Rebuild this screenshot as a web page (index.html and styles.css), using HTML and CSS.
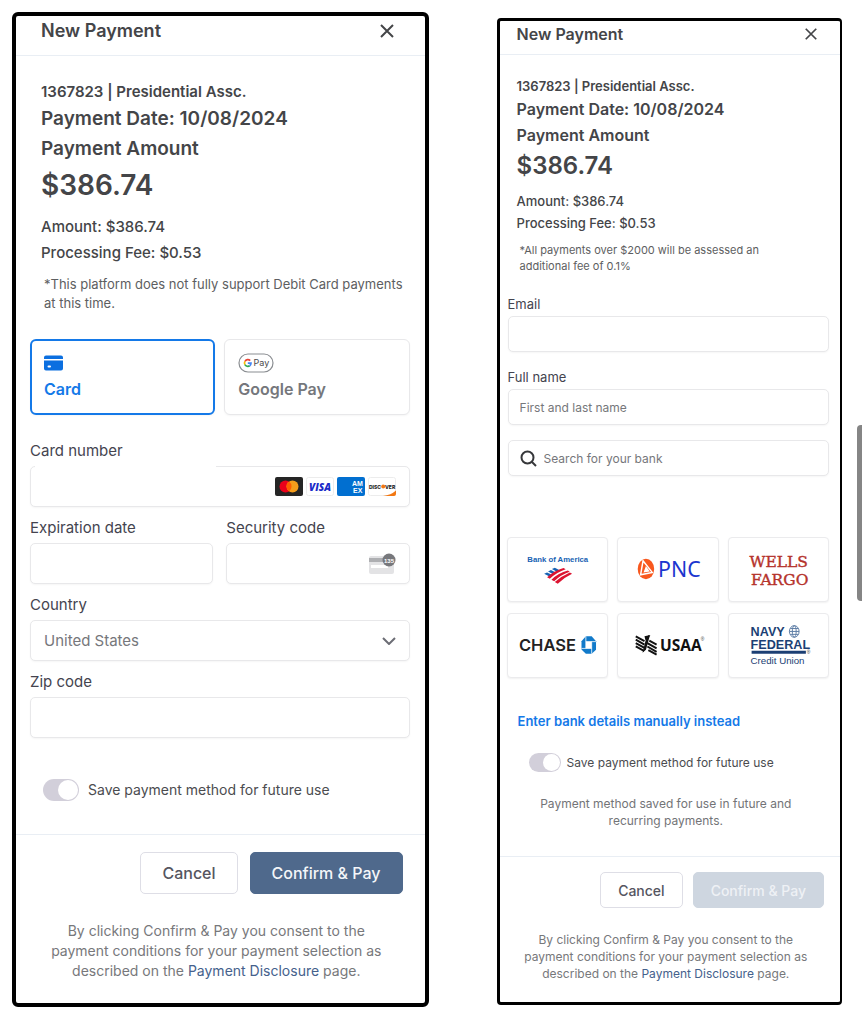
FILE: index.html
```html
<!DOCTYPE html>
<html lang="en">
<head>
  <meta charset="UTF-8">
  <meta name="viewport" content="width=device-width, initial-scale=1">
  <title>New Payment</title>
  <link rel="stylesheet" href="styles.css">
</head>
<body>
  <main class="page">

    <!-- Card payment -->
    <form class="panel panel-card">
      <header class="panel-header">
        <h1>New Payment</h1>
        <button type="button" class="close-btn" aria-label="Close">
          <svg viewBox="0 0 16 16"><path d="M2 2l12 12M14 2L2 14"/></svg>
        </button>
      </header>

      <section class="summary">
        <p class="account">1367823 | Presidential Assc.</p>
        <p class="heading">Payment Date: 10/08/2024</p>
        <p class="heading">Payment Amount</p>
        <p class="total">$386.74</p>
        <p class="line">Amount: $386.74</p>
        <p class="line">Processing Fee: $0.53</p>
        <p class="note">*This platform does not fully support Debit Card payments at this time.</p>
      </section>

      <div class="fields">
        <div class="methods">
          <button type="button" class="method active">
            <svg class="card-icon" viewBox="0 0 19 15">
              <path fill="#0b6fe0" d="M2 0h15a2 2 0 0 1 2 2v1.500H0V2a2 2 0 0 1 2-2zM0 5h19v8a2 2 0 0 1-2 2H2a2 2 0 0 1-2-2z"/>
              <rect x="3.500" y="10" width="3.500" height="2" rx="1" fill="#fff"/>
            </svg>
            <span>Card</span>
          </button>
          <button type="button" class="method">
            <svg class="gpay-icon" viewBox="0 0 36 20">
              <rect x="1" y="1" width="34" height="18" rx="9" fill="#fff" stroke="#8a8d91" stroke-width="1.200"/>
              <g fill="none" stroke-width="1.700">
                <path stroke="#ea4335" d="M12.200 7.600A3.300 3.300 0 0 0 6.900 8.500"/>
                <path stroke="#fbbc04" d="M6.900 8.400a3.300 3.300 0 0 0 0 3.200"/>
                <path stroke="#34a853" d="M6.900 11.600a3.300 3.300 0 0 0 4.800 1.100"/>
                <path stroke="#4285f4" d="M11.700 12.700A3.300 3.300 0 0 0 13 10.200H9.800"/>
              </g>
              <text x="15.500" y="13" class="gpay-text">Pay</text>
            </svg>
            <span>Google Pay</span>
          </button>
        </div>

        <div class="field">
          <label for="cardNumber">Card number</label>
          <div class="control masked">
            <input type="text" id="cardNumber" name="cardNumber" inputmode="numeric">
            <span class="brands">
              <svg viewBox="0 0 28 19">
                <rect width="28" height="19" rx="2" fill="#252525"/>
                <circle cx="10.500" cy="9.500" r="6" fill="#eb001b"/>
                <circle cx="17.500" cy="9.500" r="6" fill="#f79e1b"/>
                <path d="M14 4.600a6 6 0 0 1 0 9.800 6 6 0 0 1 0-9.800z" fill="#ff5f00"/>
              </svg>
              <svg viewBox="0 0 28 19">
                <rect x=".5" y=".5" width="27" height="18" rx="2" fill="#fff" stroke="#ececec"/>
                <text x="14" y="13.500" class="visa-text">VISA</text>
              </svg>
              <svg viewBox="0 0 28 19">
                <rect width="28" height="19" rx="2" fill="#016fd0"/>
                <text x="15" y="9" class="amex-text">AM</text>
                <text x="16" y="16" class="amex-text">EX</text>
              </svg>
              <svg viewBox="0 0 28 19">
                <rect x=".5" y=".5" width="27" height="18" rx="2" fill="#fff" stroke="#ececec"/>
                <path d="M28 13.500V17a2 2 0 0 1-2 2H15q8-1 13-5.500z" fill="#f27712"/>
                <text x="1" y="11.500" class="discover-text">DISC</text>
                <circle cx="15.200" cy="9.500" r="2" fill="#f27712"/>
                <text x="17" y="11.500" class="discover-text">VER</text>
              </svg>
            </span>
          </div>
        </div>

        <div class="field-row">
          <div class="field">
            <label for="expiry">Expiration date</label>
            <div class="control"><input type="text" id="expiry" name="expiry"></div>
          </div>
          <div class="field">
            <label for="cvc">Security code</label>
            <div class="control">
              <input type="text" id="cvc" name="cvc">
              <svg class="cvc-icon" viewBox="0 0 28 21">
                <rect x="1" y="3" width="25" height="18" rx="2" fill="#e3e3e5"/>
                <rect x="1" y="5" width="25" height="4" fill="#aeafb2"/>
                <rect x="3" y="12" width="17" height="3" fill="#fff"/>
                <circle cx="21" cy="7" r="6.500" fill="#77787c"/>
                <text x="21" y="9.500" class="cvc-text">135</text>
              </svg>
            </div>
          </div>
        </div>

        <div class="field">
          <label for="country">Country</label>
          <div class="control">
            <select id="country" name="country">
              <option>United States</option>
            </select>
            <svg class="chevron" viewBox="0 0 14 8"><path d="M1 1l6 6 6-6"/></svg>
          </div>
        </div>

        <div class="field">
          <label for="zip">Zip code</label>
          <div class="control"><input type="text" id="zip" name="zip"></div>
        </div>
      </div>

      <label class="save">
        <input type="checkbox" class="toggle" name="save" checked>
        <span>Save payment method for future use</span>
      </label>

      <footer class="panel-footer">
        <div class="actions">
          <button type="button" class="btn btn-cancel">Cancel</button>
          <button type="submit" class="btn btn-confirm">Confirm &amp; Pay</button>
        </div>
        <p class="legal">By clicking Confirm &amp; Pay you consent to the payment conditions for your payment selection as described on the <a href="#">Payment Disclosure</a> page.</p>
      </footer>
    </form>

    <!-- Bank payment -->
    <form class="panel panel-bank">
      <header class="panel-header">
        <h1>New Payment</h1>
        <button type="button" class="close-btn" aria-label="Close">
          <svg viewBox="0 0 16 16"><path d="M2 2l12 12M14 2L2 14"/></svg>
        </button>
      </header>

      <section class="summary">
        <p class="account">1367823 | Presidential Assc.</p>
        <p class="heading">Payment Date: 10/08/2024</p>
        <p class="heading">Payment Amount</p>
        <p class="total">$386.74</p>
        <p class="line">Amount: $386.74</p>
        <p class="line">Processing Fee: $0.53</p>
        <p class="note">*All payments over $2000 will be assessed an additional fee of 0.1%</p>
      </section>

      <div class="fields">
        <div class="field">
          <label for="email">Email</label>
          <div class="control"><input type="email" id="email" name="email"></div>
        </div>
        <div class="field">
          <label for="fullName">Full name</label>
          <div class="control"><input type="text" id="fullName" name="fullName" placeholder="First and last name"></div>
        </div>
        <div class="control search">
          <svg class="search-icon" viewBox="0 0 17 17"><circle cx="7.500" cy="7.500" r="6"/><path d="M12 12l4 4"/></svg>
          <input type="search" name="bank" placeholder="Search for your bank" aria-label="Search for your bank">
        </div>
      </div>

      <div class="banks">
        <button type="button" class="bank" aria-label="Bank of America">
          <svg viewBox="0 0 102 65">
            <text x="51" y="25" class="boa-text">Bank of America</text>
            <g fill="#1762b3">
              <path d="M37 37l3-1.500 6 3-3 1.500z"/>
              <path d="M41 34.500l3-1.500 5.500 2.800-3 1.500z"/>
              <path d="M45 32l3-1.200 5 2.500-3 1.400z"/>
            </g>
            <g fill="#dc1431">
              <path d="M40 40.500q8-7 17-9.500l2.200 1.200q-9 3-16.400 9.800z"/>
              <path d="M44.500 43q7-7 17-9.500l1.800 1.200q-9 3-16 9.900z"/>
              <path d="M48 45.500Q55 39 63.500 35.500l2.300 1.400Q58 40.500 51 47.200z"/>
            </g>
          </svg>
        </button>
        <button type="button" class="bank" aria-label="PNC">
          <svg viewBox="0 0 102 65">
            <ellipse cx="28.500" cy="32" rx="8.500" ry="10.500" fill="#f8581e"/>
            <path d="M25.500 23.500l9.500 12-12 2.500z" fill="none" stroke="#fff" stroke-width="1.500"/>
            <path d="M28.500 29l4 5.500-6.500 1z" fill="#fff"/>
            <text x="41" y="40" class="pnc-text">PNC</text>
          </svg>
        </button>
        <button type="button" class="bank" aria-label="Wells Fargo">
          <svg viewBox="0 0 102 65">
            <text x="51" y="30" class="wells-text">WELLS</text>
            <text x="52" y="48" class="wells-text">FARGO</text>
          </svg>
        </button>
        <button type="button" class="bank" aria-label="Chase">
          <svg viewBox="0 0 102 65">
            <text x="11" y="38" class="chase-text">CHASE</text>
            <path fill="#117aca" d="M80 23h6l4.500 5v9L86 41h-6l-4.500-4.500V28z"/>
            <path fill="#fff" d="M80 28.500h6v7h-6z"/>
            <path fill="none" stroke="#fff" stroke-width=".8" d="M80 28.500h10.500M86 28.500V41M86 35.500H75.500M80 35.500V23"/>
          </svg>
        </button>
        <button type="button" class="bank" aria-label="USAA">
          <svg viewBox="0 0 102 65">
            <g fill="none" stroke="#111" stroke-width="2">
              <path d="M18 23l9 5M18 26.500l9 5M18 30l9 5M18 33.500l8.500 4.500"/>
              <path d="M30 30l9.500 5.500M30 33.500l9.500 5.500M31 37.200l8.500 4.800"/>
              <path d="M32 27.500l7.500 4"/>
            </g>
            <path d="M25 40l4-16q1-2.500 4-2l-1 2.200-3.500 12.800zM27 23l5-1-4 5z" fill="#111"/>
            <text x="43" y="38" class="usaa-text">USAA</text>
            <text x="85" y="28" class="mark-text">®</text>
          </svg>
        </button>
        <button type="button" class="bank" aria-label="Navy Federal Credit Union">
          <svg viewBox="0 0 102 65">
            <text x="22" y="23" class="navy-text">NAVY</text>
            <text x="22" y="36" class="navy-text">FEDERAL</text>
            <g fill="none" stroke="#5b7ba3">
              <ellipse cx="67" cy="18" rx="5" ry="6"/>
              <ellipse cx="67" cy="18" rx="2" ry="6"/>
              <path d="M62 18h10M63 15h8M63 21h8"/>
            </g>
            <path d="M23 38h56v3H23z" fill="#1c3f74"/>
            <text x="80" y="41" class="mark-text">®</text>
            <text x="22" y="52" class="union-text">Credit Union</text>
          </svg>
        </button>
      </div>

      <a class="manual-link" href="#">Enter bank details manually instead</a>

      <label class="save">
        <input type="checkbox" class="toggle" name="save" checked>
        <span>Save payment method for future use</span>
      </label>
      <p class="save-note">Payment method saved for use in future and recurring payments.</p>

      <footer class="panel-footer">
        <div class="actions">
          <button type="button" class="btn btn-cancel">Cancel</button>
          <button type="submit" class="btn btn-confirm" disabled>Confirm &amp; Pay</button>
        </div>
        <p class="legal">By clicking Confirm &amp; Pay you consent to the payment conditions for your payment selection as described on the <a href="#">Payment Disclosure</a> page.</p>
      </footer>
    </form>
  </main>
  <div class="scroll-thumb"></div>
</body>
</html>
```
FILE: styles.css
```css
* {
  box-sizing: border-box;
}
body {
  margin: 0;
  background: #fff;
  font-family: Inter, "Liberation Sans", sans-serif;
  color: #444548;
}
h1, p {
  margin: 0;
}
button, input, select {
  font-family: inherit;
}
button {
  cursor: pointer;
}
svg {
  display: block;
}
.page {
  display: flex;
  align-items: flex-start;
  gap: 68px;
  padding: 12px 20px 12px 12px;
}
.panel {
  min-width: 0;
  background: #fff;
  border: 4px solid #000;
  border-radius: 6px;
}
.panel-card {
  flex: 6 1 0;
}
.panel-bank {
  flex: 5 1 0;
  margin-top: 6px;
  border-width: 3px 2px 3px 3px;
  border-radius: 4px;
}

/* header */
.panel-header {
  display: flex;
  justify-content: space-between;
  align-items: center;
  padding: 4px 30px 13px 25px;
  border-bottom: 1px solid #e9eef4;
}
.panel-header h1 {
  font-size: 18px;
  line-height: 22px;
  font-weight: 600;
}
.close-btn {
  padding: 0;
  border: none;
  background: none;
}
.close-btn svg {
  width: 16px;
  height: 16px;
  fill: none;
  stroke: #444548;
  stroke-width: 2;
}
.panel-bank .panel-header {
  padding: 3px 22px 10px 17px;
}
.panel-bank .panel-header h1 {
  font-size: 16px;
  line-height: 20px;
}
.panel-bank .close-btn svg {
  width: 14px;
  height: 14px;
}

/* payment summary */
.summary {
  padding: 24px 10px 0 25px;
}
.account {
  font-size: 15px;
  line-height: 24px;
  font-weight: 600;
}
.heading {
  font-size: 19px;
  line-height: 30px;
  font-weight: 600;
}
.total {
  margin-bottom: 8px;
  font-size: 28px;
  line-height: 42px;
  font-weight: 600;
}
.line {
  font-size: 15px;
  line-height: 26px;
  font-weight: 500;
}
.note {
  margin-top: 9px;
  padding-left: 3px;
  font-size: 13px;
  line-height: 19px;
  color: #5d5e61;
}
.panel-bank .summary {
  padding: 21px 17px 0;
}
.panel-bank .account {
  font-size: 13px;
  line-height: 20px;
}
.panel-bank .heading {
  font-size: 16px;
  line-height: 26px;
}
.panel-bank .total {
  margin-bottom: 6px;
  font-size: 24px;
  line-height: 36px;
}
.panel-bank .line {
  font-size: 13px;
  line-height: 22px;
}
.panel-bank .note {
  max-width: 260px;
  margin-top: 8px;
  font-size: 11px;
  line-height: 16px;
}

/* form fields */
.fields {
  display: flex;
  flex-direction: column;
  gap: 11px;
  padding: 26px 15px 0 14px;
}
.methods {
  display: grid;
  grid-template-columns: 1fr 1fr;
  gap: 9px;
  margin-bottom: 15px;
}
.method {
  display: flex;
  flex-direction: column;
  align-items: flex-start;
  gap: 4px;
  padding: 13px;
  border: 1px solid #e8e8ea;
  border-radius: 6px;
  background: #fff;
  box-shadow: 0 1px 2px rgba(0, 0, 0, 0.04);
  font-size: 16px;
  line-height: 24px;
  font-weight: 600;
  color: #75777c;
}
.method.active {
  padding: 12px;
  border: 2px solid #1479e8;
  color: #1479e8;
}
.card-icon {
  width: 19px;
  height: 20px;
}
.gpay-icon {
  width: 36px;
  height: 20px;
}
.gpay-text {
  font-size: 9px;
  font-weight: 400;
  fill: #4a4b4e;
}
.field {
  display: flex;
  flex-direction: column;
  gap: 5px;
  flex: 1;
  min-width: 0;
}
.field label {
  font-size: 15px;
  line-height: 20px;
  color: #44444f;
}
.field-row {
  display: flex;
  gap: 13px;
}
.control {
  position: relative;
  display: flex;
  align-items: center;
  height: 41px;
  padding: 0 13px;
  border: 1px solid #e8e8ea;
  border-radius: 5px;
  background: #fff;
  box-shadow: 0 1px 2px rgba(0, 0, 0, 0.04);
}
.control input,
.control select {
  flex: 1;
  min-width: 0;
  height: 100%;
  padding: 0;
  border: none;
  outline: none;
  background: none;
  appearance: none;
  font-size: 15px;
  color: #76777b;
}
.control input::placeholder {
  color: #76777b;
  opacity: 1;
}
/* open part of the card number outline */
.masked::before {
  content: "";
  position: absolute;
  top: -1px;
  left: 4px;
  width: 48%;
  height: 1px;
  background: #fff;
}
.brands {
  display: flex;
  gap: 3px;
}
.brands svg {
  width: 28px;
  height: 19px;
}
.visa-text {
  font: italic 800 10px "Open Sans", sans-serif;
  text-anchor: middle;
  fill: #1a2bc8;
}
.amex-text {
  font: 700 7px "Liberation Sans", sans-serif;
  fill: #fff;
}
.discover-text {
  font: 800 5px Inter, sans-serif;
  fill: #222;
}
.cvc-icon {
  width: 28px;
  height: 21px;
}
.cvc-text {
  font: 700 6px "Liberation Sans", sans-serif;
  text-anchor: middle;
  fill: #fff;
}
.chevron {
  width: 14px;
  height: 8px;
  fill: none;
  stroke: #6c6d75;
  stroke-width: 2;
  pointer-events: none;
}
.panel-bank .fields {
  gap: 15px;
  padding: 20px 11px 0 8px;
}
.panel-bank .field {
  gap: 2px;
}
.panel-bank .field label {
  font-size: 13px;
}
.panel-bank .control {
  height: 36px;
  padding: 0 11px;
}
.panel-bank .control input {
  font-size: 12px;
}
.search {
  gap: 7px;
}
.search-icon {
  width: 17px;
  height: 17px;
  fill: none;
  stroke: #36373a;
  stroke-width: 2;
}

/* bank list */
.banks {
  display: grid;
  grid-template-columns: repeat(3, 1fr);
  gap: 11px 9px;
  padding: 61px 11px 0 7px;
}
.bank {
  height: 65px;
  padding: 0;
  border: 1px solid #ebebed;
  border-radius: 4px;
  background: #fff;
  box-shadow: 0 1px 2px rgba(0, 0, 0, 0.06);
}
.bank svg {
  width: 100%;
  height: 100%;
}
.boa-text {
  font: 700 8px "Liberation Sans", sans-serif;
  text-anchor: middle;
  fill: #1762b3;
}
.pnc-text {
  font: 22px "Noto Sans", sans-serif;
  fill: #1c36cf;
}
.wells-text {
  font: 16px "DejaVu Serif", serif;
  text-anchor: middle;
  fill: #b5332c;
  stroke: #b5332c;
  stroke-width: 0.4;
}
.chase-text {
  font: 600 17px Inter, sans-serif;
  fill: #222;
}
.usaa-text {
  font: 700 16px "Open Sans", sans-serif;
  fill: #111;
}
.navy-text {
  font: 700 13px "Liberation Sans", sans-serif;
  fill: #1c3f74;
}
.union-text {
  font: 10px "Liberation Sans", sans-serif;
  fill: #1c3f74;
}
.mark-text {
  font: 5px "Liberation Sans", sans-serif;
  fill: #333;
}
.manual-link {
  display: block;
  margin: 34px 18px 0;
  font-size: 13px;
  line-height: 18px;
  font-weight: 600;
  color: #1479e8;
  text-decoration: none;
}

/* save toggle */
.save {
  display: flex;
  align-items: center;
  gap: 9px;
  margin: 41px 27px 33px;
  font-size: 14px;
  line-height: 22px;
  color: #4b4c4f;
}
.toggle {
  appearance: none;
  flex: none;
  display: flex;
  justify-content: flex-end;
  width: 36px;
  height: 22px;
  margin: 0;
  padding: 1px;
  border-radius: 11px;
  background: #d2cfda;
}
.toggle::before {
  content: "";
  width: 20px;
  height: 20px;
  border-radius: 50%;
  background: #fff;
}
.toggle:not(:checked) {
  justify-content: flex-start;
}
.panel-bank .save {
  gap: 6px;
  margin: 23px 29px;
  font-size: 12px;
  line-height: 19px;
}
.panel-bank .toggle {
  width: 32px;
  height: 19px;
}
.panel-bank .toggle::before {
  width: 17px;
  height: 17px;
}
.save-note {
  padding: 0 36px 27px 28px;
  font-size: 12px;
  line-height: 17px;
  text-align: center;
  color: #737477;
}

/* footer */
.panel-footer {
  padding: 17px 22px 22px;
  border-top: 1px solid #e9eef4;
}
.actions {
  display: flex;
  justify-content: flex-end;
  gap: 12px;
}
.btn {
  height: 42px;
  padding: 0 21px;
  border: 1px solid #dedee6;
  border-radius: 5px;
  background: #fff;
  font-size: 16px;
  font-weight: 500;
  color: #55555f;
}
.btn-confirm {
  border-color: #4f698c;
  background: #4f698c;
  color: #f4f6f9;
}
.btn-confirm:disabled {
  border-color: #ced6e0;
  background: #ced6e0;
  color: #eef1f5;
}
.legal {
  max-width: 340px;
  margin: 27px auto 0;
  padding-right: 8px;
  font-size: 14px;
  line-height: 20px;
  text-align: center;
  color: #77787b;
}
.legal a {
  color: #45618c;
  text-decoration: none;
}
.panel-bank .panel-footer {
  padding: 15px 16px 20px;
}
.panel-bank .actions {
  gap: 10px;
}
.panel-bank .btn {
  height: 36px;
  padding: 0 17px;
  font-size: 14px;
}
.panel-bank .legal {
  max-width: 300px;
  margin-top: 23px;
  font-size: 12px;
  line-height: 17px;
}

.scroll-thumb {
  position: absolute;
  top: 425px;
  right: 0;
  width: 5px;
  height: 176px;
  border-radius: 4px 0 0 4px;
  background: #858585;
}
```
